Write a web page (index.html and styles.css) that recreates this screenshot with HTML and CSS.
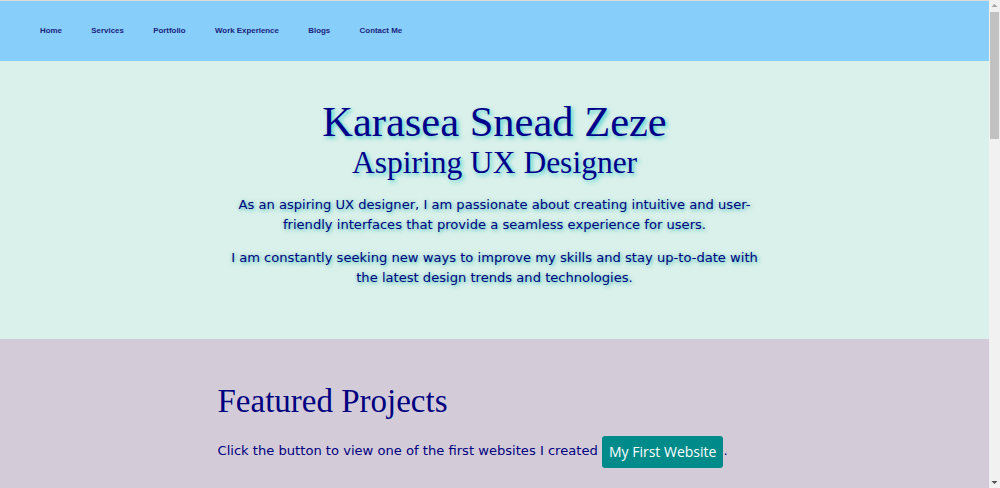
FILE: index.html
```html
<!DOCTYPE html>
<html lang="en">
<head>
<meta charset="utf-8">
<title>Karasea Snead Zeze</title>
<link rel="stylesheet" href="styles.css">
</head>
<body>
<div class="window">
<div class="page">
<header class="topbar">
  <nav class="nav">
    <a class="nav-link" href="#">Home</a>
    <a class="nav-link" href="#">Services</a>
    <a class="nav-link" href="#">Portfolio</a>
    <a class="nav-link" href="#">Work Experience</a>
    <a class="nav-link" href="#">Blogs</a>
    <a class="nav-link" href="#">Contact Me</a>
  </nav>
</header>
<section class="hero">
  <h1 class="hero-name">Karasea Snead Zeze</h1>
  <h2 class="hero-role">Aspiring UX Designer</h2>
  <div class="hero-text">
    <p>As an aspiring UX designer, I am passionate about creating intuitive and user-friendly interfaces that provide a seamless experience for users.</p>
    <p>I am constantly seeking new ways to improve my skills and stay up-to-date with the latest design trends and technologies.</p>
  </div>
</section>
<section class="featured">
  <div class="featured-inner">
    <h2 class="featured-title">Featured Projects</h2>
    <p class="featured-text">Click the button to view one of the first websites I created <a class="btn" href="#">My First Website</a>.</p>
  </div>
</section>
</div>
<div class="scrollbar" aria-hidden="true">
  <svg class="sb-arrow" width="11" height="11" viewBox="0 0 11 11"><path d="M2.5 7 L5.5 4 L8.5 7 Z" fill="#a3a3a3"/></svg>
  <div class="sb-thumb"></div>
  <div class="sb-track"></div>
  <svg class="sb-arrow" width="11" height="11" viewBox="0 0 11 11"><path d="M2.5 4 L5.5 7 L8.5 4 Z" fill="#505050"/></svg>
</div>
</div>
</body>
</html>
```
FILE: styles.css
```css
html, body {
  margin: 0;
  padding: 0;
}
body {
  font-family: "DejaVu Sans", sans-serif;
  color: #000080;
}
.window {
  display: flex;
  height: 100vh;
  overflow: hidden;
}
.page {
  flex: 1;
  min-width: 0;
  border-top: 1px solid #dcdcdc;
}
.scrollbar {
  width: 11px;
  flex: none;
  background: #f1f1f1;
  display: flex;
  flex-direction: column;
  align-items: center;
}
.sb-arrow {
  flex: none;
  display: block;
}
.sb-thumb {
  width: 9px;
  height: 127px;
  flex: none;
  background: #c1c1c1;
  margin-top: 1px;
}
.sb-track {
  flex: 1;
}
.topbar {
  background: #87cefa;
  height: 60px;
  display: flex;
  align-items: center;
}
.nav {
  display: flex;
  gap: 29.4px;
  padding-left: 40px;
  margin-top: -2px;
}
.nav-link {
  font-family: "Liberation Sans", Arial, sans-serif;
  font-weight: bold;
  font-size: 7.9px;
  color: #1a237e;
  text-decoration: none;
}
.hero {
  background: #daf0ea;
  height: 278px;
  box-sizing: border-box;
  padding-top: 37px;
  text-align: center;
}
.hero-name {
  margin: 0;
  font-family: "Liberation Serif", serif;
  font-weight: normal;
  font-size: 42.5px;
  line-height: 47px;
  color: #00008b;
  text-shadow: 2px 2px 4px #48d1cc;
}
.hero-role {
  margin: 0;
  font-family: "Liberation Serif", serif;
  font-weight: normal;
  font-size: 31.5px;
  line-height: 36px;
  color: #00008b;
  text-shadow: 2px 2px 4px #48d1cc;
}
.hero-text {
  width: 540px;
  margin: 14px auto 0;
  font-size: 13.1px;
  line-height: 20px;
  text-shadow: 1px 1px 4px #20b2aa;
}
.hero-text p {
  margin: 0 0 13px;
}
.featured {
  background: #d3ccd8;
  min-height: 1400px;
}
.featured-inner {
  width: 554px;
  margin: 0 auto;
  padding-top: 40px;
}
.featured-title {
  margin: 0;
  font-family: "Liberation Serif", serif;
  font-weight: normal;
  font-size: 33px;
  line-height: 44px;
  color: #000080;
}
.featured-text {
  margin: 12px 0 0;
  font-size: 13.1px;
  line-height: 32px;
  white-space: nowrap;
}
.btn {
  display: inline-block;
  background: #008b8b;
  color: #fff;
  text-decoration: none;
  font-family: "Open Sans", sans-serif;
  font-weight: 500;
  font-size: 14px;
  line-height: 32px;
  padding: 0 7px;
  border-radius: 3px;
  vertical-align: middle;
}
```
